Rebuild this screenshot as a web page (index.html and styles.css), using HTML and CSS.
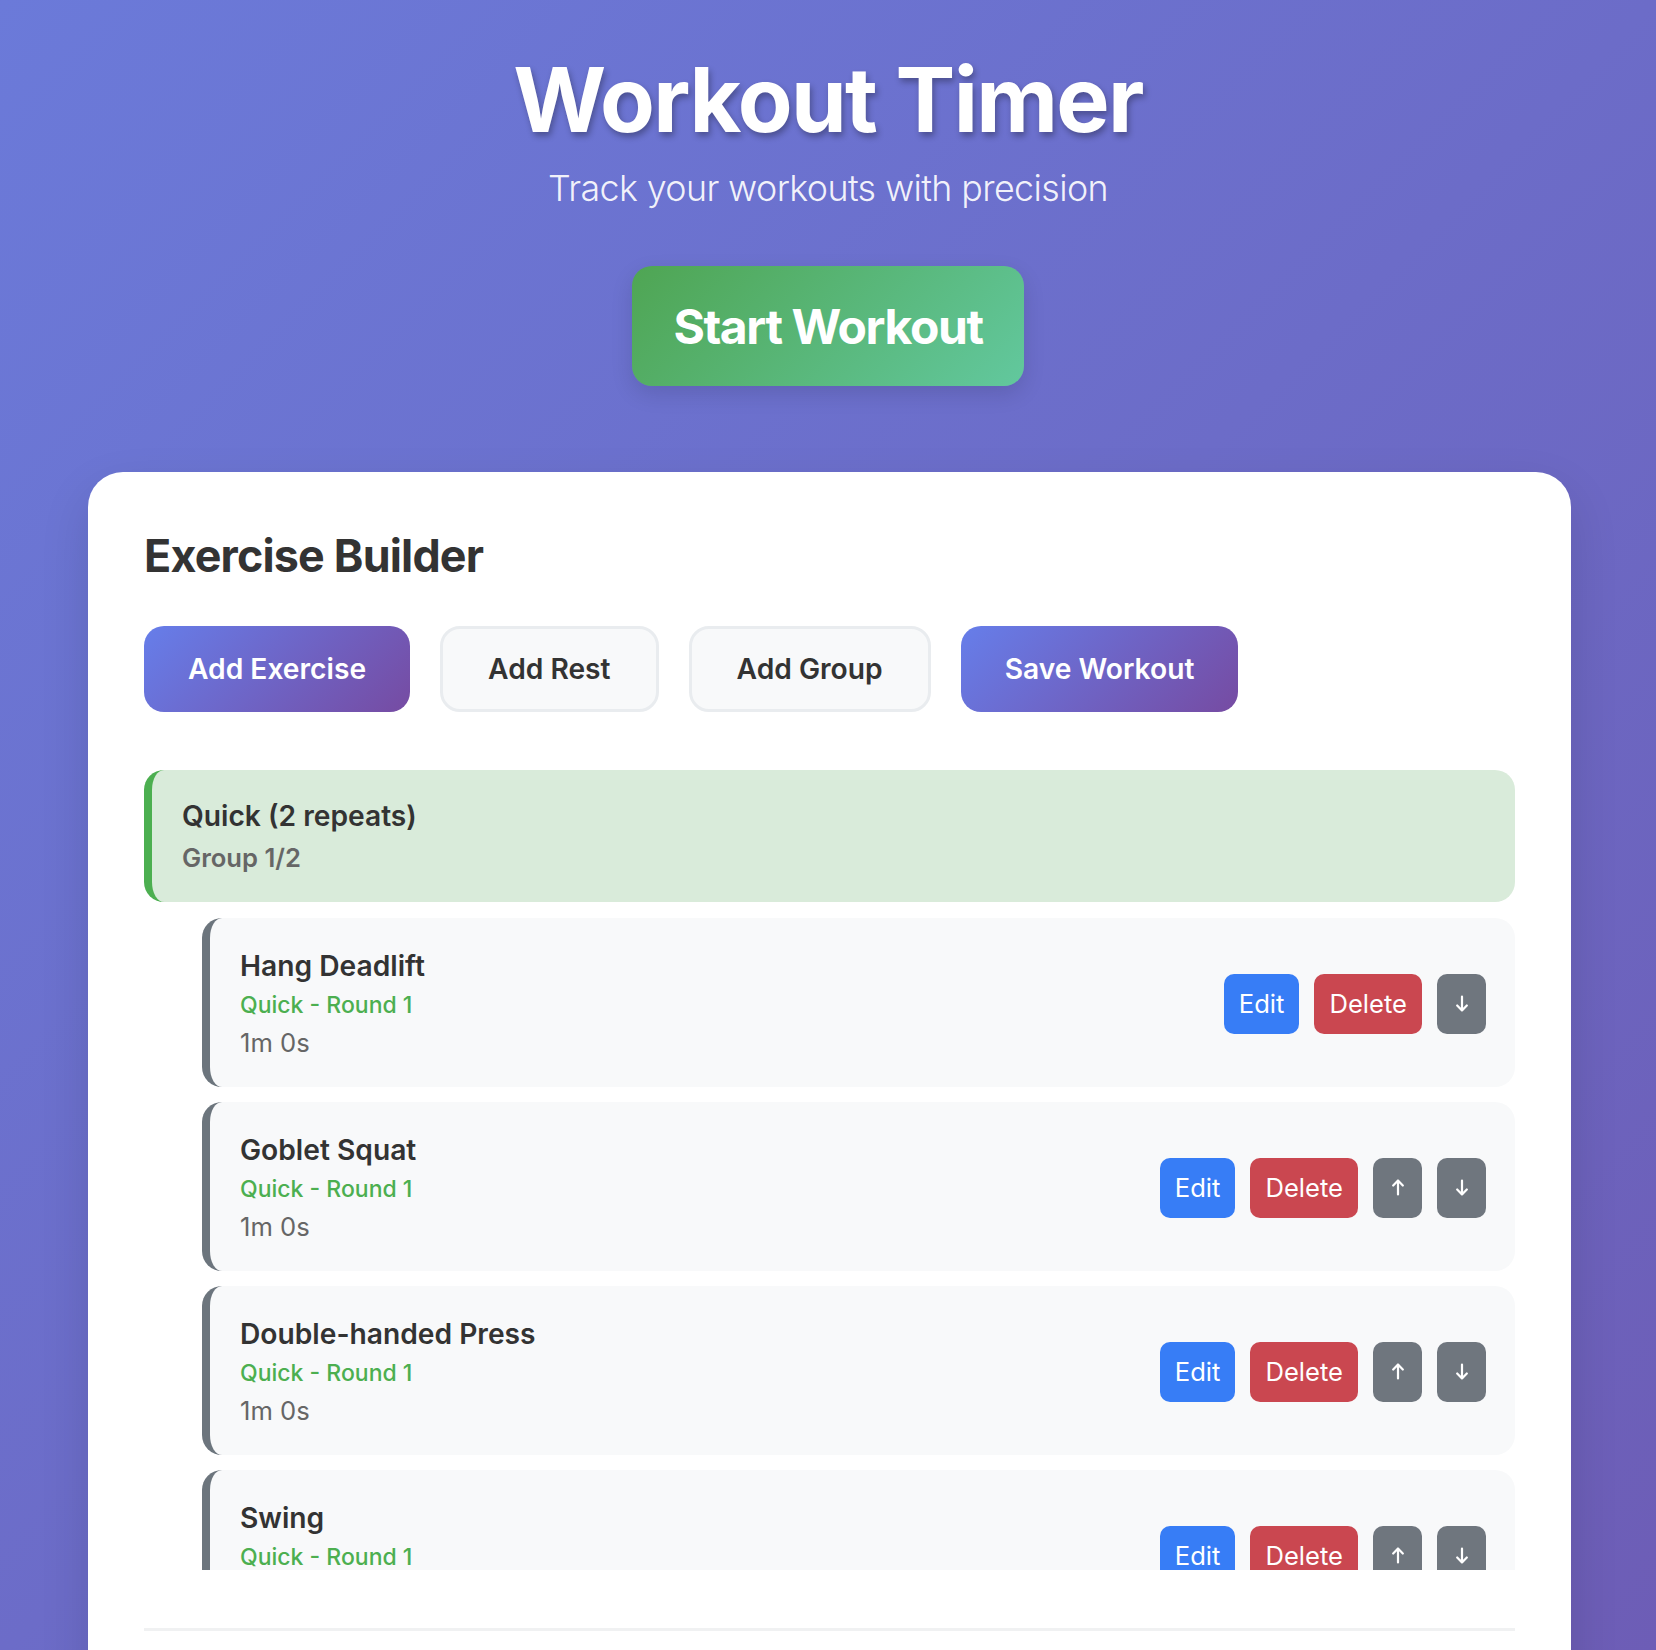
FILE: index.html
```html
<!DOCTYPE html>
<html lang="en">
<head>
<meta charset="utf-8">
<title>Workout Timer</title>
<link rel="stylesheet" href="styles.css">
</head>
<body>
<header class="hero">
  <h1 class="hero-title">Workout Timer</h1>
  <p class="hero-sub">Track your workouts with precision</p>
  <button class="start-btn">Start Workout</button>
</header>

<main class="card">
  <h2 class="card-title">Exercise Builder</h2>
  <div class="toolbar">
    <button class="tb-btn tb-primary">Add Exercise</button>
    <button class="tb-btn tb-light">Add Rest</button>
    <button class="tb-btn tb-light">Add Group</button>
    <button class="tb-btn tb-primary">Save Workout</button>
  </div>

  <div class="list">
    <div class="group-head">
      <div class="group-title">Quick (2 repeats)</div>
      <div class="group-sub">Group 1/2</div>
    </div>

    <div class="item">
      <div class="item-info">
        <div class="item-name">Hang Deadlift</div>
        <div class="item-meta">Quick - Round 1</div>
        <div class="item-dur">1m 0s</div>
      </div>
      <div class="item-actions">
        <button class="act act-edit">Edit</button>
        <button class="act act-del">Delete</button>
        <button class="act act-move"><svg class="arr" viewBox="0 0 12 17" width="12" height="17"><path d="M6 1.5V15.5M1.2 10.5L6 15.5L10.8 10.5"/></svg></button>
      </div>
    </div>

    <div class="item">
      <div class="item-info">
        <div class="item-name">Goblet Squat</div>
        <div class="item-meta">Quick - Round 1</div>
        <div class="item-dur">1m 0s</div>
      </div>
      <div class="item-actions">
        <button class="act act-edit">Edit</button>
        <button class="act act-del">Delete</button>
        <button class="act act-move"><svg class="arr" viewBox="0 0 12 17" width="12" height="17"><path d="M6 15.5V1.5M1.2 6.5L6 1.5L10.8 6.5"/></svg></button>
        <button class="act act-move"><svg class="arr" viewBox="0 0 12 17" width="12" height="17"><path d="M6 1.5V15.5M1.2 10.5L6 15.5L10.8 10.5"/></svg></button>
      </div>
    </div>

    <div class="item">
      <div class="item-info">
        <div class="item-name">Double-handed Press</div>
        <div class="item-meta">Quick - Round 1</div>
        <div class="item-dur">1m 0s</div>
      </div>
      <div class="item-actions">
        <button class="act act-edit">Edit</button>
        <button class="act act-del">Delete</button>
        <button class="act act-move"><svg class="arr" viewBox="0 0 12 17" width="12" height="17"><path d="M6 15.5V1.5M1.2 6.5L6 1.5L10.8 6.5"/></svg></button>
        <button class="act act-move"><svg class="arr" viewBox="0 0 12 17" width="12" height="17"><path d="M6 1.5V15.5M1.2 10.5L6 15.5L10.8 10.5"/></svg></button>
      </div>
    </div>

    <div class="item">
      <div class="item-info">
        <div class="item-name">Swing</div>
        <div class="item-meta">Quick - Round 1</div>
        <div class="item-dur">1m 0s</div>
      </div>
      <div class="item-actions">
        <button class="act act-edit">Edit</button>
        <button class="act act-del">Delete</button>
        <button class="act act-move"><svg class="arr" viewBox="0 0 12 17" width="12" height="17"><path d="M6 15.5V1.5M1.2 6.5L6 1.5L10.8 6.5"/></svg></button>
        <button class="act act-move"><svg class="arr" viewBox="0 0 12 17" width="12" height="17"><path d="M6 1.5V15.5M1.2 10.5L6 15.5L10.8 10.5"/></svg></button>
      </div>
    </div>
  </div>

  <div class="divider"></div>
  <div class="below"></div>
</main>
</body>
</html>
```

FILE: styles.css
```css
* { box-sizing: border-box; }

html, body {
  margin: 0;
  padding: 0;
}

body {
  font-family: Inter, "Noto Sans", "Liberation Sans", sans-serif;
  background: linear-gradient(135deg, #6b7ad9 0%, #6c6cc8 50%, #6d5db6 100%) fixed;
  min-height: 1650px;
  color: #333;
}

.hero {
  text-align: center;
  padding-top: 46px;
  display: flex;
  flex-direction: column;
  align-items: center;
}

.hero-title {
  margin: 0;
  font-size: 89.6px;
  line-height: 107px;
  font-weight: 700;
  color: #fff;
  letter-spacing: -1.7px;
  text-shadow: 2px 4px 6px rgba(0, 0, 0, 0.3);
}

.hero-sub {
  margin: 14px 0 0;
  font-size: 35.8px;
  line-height: 43px;
  font-weight: 300;
  letter-spacing: -0.6px;
  color: rgba(255, 255, 255, 0.92);
}

.start-btn {
  margin-top: 56px;
  height: 120px;
  width: 392px;
  border: none;
  border-radius: 20px;
  background: linear-gradient(135deg, #4fa553 0%, #62c89e 100%);
  color: #fff;
  font-family: inherit;
  font-size: 48px;
  font-weight: 700;
  letter-spacing: -1.4px;
  box-shadow: 0 8px 22px rgba(0, 0, 0, 0.12);
}

.card {
  margin: 86px 0 0 88px;
  width: 1483px;
  background: #fff;
  border-radius: 35px;
  padding: 57px 56px 40px;
  box-shadow: 0 20px 50px rgba(0, 0, 0, 0.12);
}

.card-title {
  margin: 0 0 43px;
  font-size: 44.8px;
  line-height: 54px;
  font-weight: 700;
  letter-spacing: -0.8px;
  color: #333;
}

.toolbar {
  display: flex;
  gap: 30px;
}

.tb-btn {
  height: 86px;
  padding: 0 41px;
  border-radius: 20px;
  border: 3px solid transparent;
  font-family: inherit;
  font-size: 28.2px;
  font-weight: 600;
}

.tb-primary {
  background: linear-gradient(135deg, #667eea 0%, #764ba2 100%) border-box;
  color: #fff;
}

.tb-light {
  padding: 0 45px;
  background: #f8f9fa;
  border-color: #e9ecef;
  color: #333;
}

.list {
  margin-top: 58px;
  height: 800px;
  overflow: hidden;
  display: flex;
  flex-direction: column;
}

.group-head {
  flex: none;
  background: #d9ebda;
  border-left: 8px solid #4caf50;
  border-radius: 20px;
  padding: 29px 30px 29px;
}

.group-title {
  font-size: 28.2px;
  line-height: 34px;
  font-weight: 600;
  color: #333;
}

.group-sub {
  margin-top: 10px;
  font-size: 25.6px;
  line-height: 30px;
  font-weight: 600;
  color: #666;
}

.item {
  flex: none;
  margin: 16px 0 0 58px;
  background: #f8f9fa;
  border-left: 8px solid #6c757d;
  border-radius: 20px;
  padding: 31px 29px 29px 30px;
  display: flex;
  justify-content: space-between;
  align-items: center;
}

.item + .item {
  margin-top: 15px;
}

.item-name {
  font-size: 28.2px;
  line-height: 34px;
  font-weight: 600;
  color: #333;
}

.item-meta {
  margin-top: 8px;
  font-size: 23px;
  line-height: 28px;
  font-weight: 500;
  color: #4caf50;
}

.item-dur {
  margin-top: 8px;
  font-size: 25.6px;
  line-height: 31px;
  font-weight: 400;
  color: #666;
}

.item-actions {
  display: flex;
  gap: 15px;
}

.act {
  height: 60px;
  padding: 0 15px;
  border: none;
  border-radius: 10px;
  color: #fff;
  font-family: inherit;
  font-size: 25.6px;
  font-weight: 400;
  display: flex;
  align-items: center;
  justify-content: center;
}

.act-edit { background: #377df6; }
.act-del { background: #ca4750; }
.act-move { background: #6f767e; width: 49px; padding: 0; }

.arr {
  fill: none;
  stroke: #fff;
  stroke-width: 2.2;
  stroke-linecap: round;
  stroke-linejoin: round;
}

.divider {
  margin-top: 58px;
  border-top: 3px solid #f0f1f2;
}

.below {
  height: 200px;
}
```
